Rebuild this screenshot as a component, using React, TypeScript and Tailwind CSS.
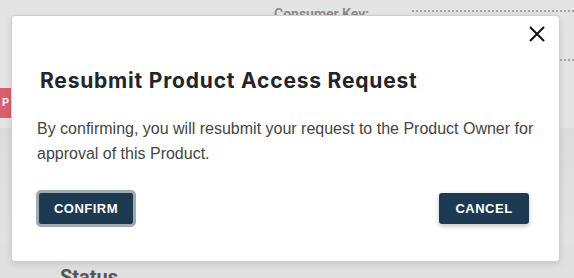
import React from "react";

export default function App() {
  return (
    <div className="relative w-[574px] h-[278px] overflow-hidden bg-[#e3e3e3]" style={{ fontFamily: '"Liberation Sans", Arial, sans-serif' }}>
      {/* background page (dimmed) */}
      <div className="flex flex-col h-full">
        <div className="h-[128px] shrink-0 bg-[#e4e4e4]">
          <div className="flex items-start pt-[6px]">
            <div className="w-[274px]" />
            <div className="text-[14px] font-semibold text-[#8a8a8a] leading-[16px]" style={{ fontFamily: "Roboto, sans-serif" }}>Consumer Key:</div>
            <div className="ml-[43px] mt-[4px] flex-1 border-t-2 border-dotted border-[#a3a3a3]" />
          </div>
          <div className="flex justify-end mt-[37px]">
            <div className="w-[14px] border-t-2 border-dotted border-[#a3a3a3]" />
          </div>
          <div className="mt-[27px] w-[11px] h-[30px] bg-[#d6606b] text-white text-[11px] font-bold flex items-center justify-end overflow-hidden pr-[2px]" style={{ fontFamily: "Roboto, sans-serif" }}>
            <span>P</span>
          </div>
        </div>
        <div className="h-[115px] shrink-0 bg-gradient-to-b from-[#dcdcdc] to-[#e2e2e2]" />
        <div className="h-[35px] shrink-0 overflow-hidden bg-[#e0e0e0] pl-[60px] pt-[22px]">
          <div className="text-[20px] font-bold text-[#555] leading-[24px]" style={{ fontFamily: "Roboto, sans-serif" }}>Status</div>
        </div>
      </div>

      {/* modal */}
      <div className="absolute left-[11px] top-[15px] w-[549px] h-[247px] bg-white rounded-[4px] border border-[#d0d0d0] shadow-[0_2px_6px_rgba(0,0,0,0.12)] flex flex-col">
        <div className="flex justify-end pt-[9px] pr-[13px]">
          <svg width="18" height="18" viewBox="0 0 18 18" fill="none" stroke="#111" strokeWidth="2">
            <path d="M2 2 L16 16 M16 2 L2 16" />
          </svg>
        </div>
        <div className="pl-[28px] mt-[24px] text-[21px] font-bold text-[#222529] leading-[28px] tracking-[0.8px]" style={{ fontFamily: "Inter, sans-serif" }}>
          Resubmit Product Access Request
        </div>
        <div className="pl-[25px] pr-[20px] mt-[21px] text-[16px] text-[#454545] leading-[25px]">
          By confirming, you will resubmit your request to the Product Owner for approval of this Product.
        </div>
        <div className="flex justify-between items-center pl-[24px] pr-[30px] mt-[24px]">
          <button className="w-[100px] h-[37px] rounded-[5px] border-[3px] border-[#a0aab4] bg-[#1d3a52] text-white text-[13px] font-bold tracking-[0.5px]">
            CONFIRM
          </button>
          <button className="w-[90px] h-[31px] rounded-[3px] bg-[#1d3a52] text-white text-[13px] font-bold tracking-[0.5px] shadow-[0_2px_5px_rgba(0,0,0,0.25)]">
            CANCEL
          </button>
        </div>
      </div>
    </div>
  );
}
